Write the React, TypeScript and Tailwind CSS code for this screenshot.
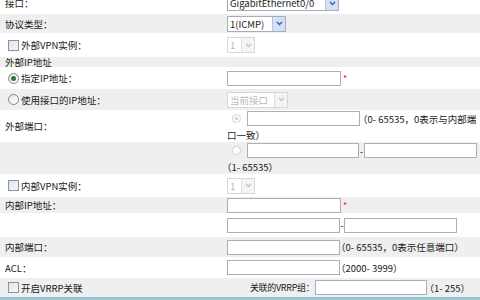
import React from 'react';

function Select({ value, className, disabled }: { value: string; className: string; disabled?: boolean }) {
  return (
    <div
      className={`flex h-[16px] items-stretch border bg-white ${
        disabled ? 'border-[#d6d6d6] text-[#b8b8b8]' : 'border-[#a7aeb8] text-[#1a1a1a]'
      } ${className}`}
    >
      <span className="flex-1 truncate pl-[2px] leading-[14px]">{value}</span>
      <span
        className={`flex w-[13px] items-center justify-center border-l ${
          disabled ? 'border-[#e0e0e0] bg-[#f4f4f4]' : 'border-[#b4c6e6] bg-[#d3e0f7]'
        }`}
      >
        <svg width="7" height="5" viewBox="0 0 7 5">
          <path d="M1 1l2.5 2.5L6 1" fill="none" stroke={disabled ? '#c4c4c4' : '#3a5fa8'} strokeWidth="1.4" />
        </svg>
      </span>
    </div>
  );
}

function Input({ className }: { className: string }) {
  return <div className={`h-[15px] border border-[#a9b0ba] bg-white ${className}`} />;
}

function Checkbox() {
  return <span className="mr-[2px] inline-block h-[11px] w-[11px] shrink-0 border border-[#8494a6] bg-gradient-to-br from-[#dde4ec] to-[#f6f8fa]" />;
}

function Radio({ checked, disabled }: { checked?: boolean; disabled?: boolean }) {
  if (disabled) {
    return (
      <span className="flex h-[9px] w-[9px] shrink-0 items-center justify-center rounded-full border border-[#d2d2d2] bg-white">
        {checked && <span className="h-[3px] w-[3px] rounded-full bg-[#c8c8c8]" />}
      </span>
    );
  }
  return (
    <span className="mr-[2px] flex h-[11px] w-[11px] shrink-0 items-center justify-center rounded-full border border-[#7d8793] bg-gradient-to-br from-[#e4e8ec] to-white">
      {checked && <span className="h-[5px] w-[5px] rounded-full bg-[#2d7a3a]" />}
    </span>
  );
}

function Star() {
  return <span className="ml-[2px] text-[9px] leading-none text-[#e02020]">*</span>;
}

function Row({ gray, h, label, children }: { gray?: boolean; h: string; label?: React.ReactNode; children?: React.ReactNode }) {
  return (
    <div className={`flex ${h} ${gray ? 'bg-[#efefef]' : 'bg-white'}`}>
      <div className="flex w-[227px] shrink-0 items-center pl-[5px]">{label}</div>
      <div className="flex min-w-0 flex-1 items-center">{children}</div>
    </div>
  );
}

export default function App() {
  return (
    <div className="h-[300px] w-[480px] overflow-hidden bg-white font-['Noto_Sans_CJK_SC','Liberation_Sans',sans-serif] text-[9.5px] leading-[12px] text-[#1a1a1a]">
      {/* 接口 row, scrolled partly out of view */}
      <div className="h-[14px] overflow-hidden bg-white">
        <div className="-mt-[8px] flex h-[22px]">
          <div className="flex w-[227px] shrink-0 items-center pl-[5px]">接口：</div>
          <div className="flex items-center">
            <Select value="GigabitEthernet0/0" className="w-[112px]" />
          </div>
        </div>
      </div>

      <Row gray h="h-[19px]" label="协议类型：">
        <Select value="1(ICMP)" className="w-[59px]" />
      </Row>

      <Row h="h-[24px]" label={<><span className="ml-[3px]" /><Checkbox />外部VPN实例：</>}>
        <Select value="1" className="w-[28px]" disabled />
      </Row>

      <div className="flex h-[10px] items-center bg-[#efefef] pl-[5px] leading-[10px]">外部IP地址</div>

      <Row h="h-[22px]" label={<><span className="ml-[3px]" /><Radio checked />指定IP地址：</>}>
        <Input className="w-[114px]" />
        <Star />
      </Row>

      <Row gray h="h-[21px]" label={<><span className="ml-[3px]" /><Radio />使用接口的IP地址：</>}>
        <Select value="当前接口" className="w-[61px]" disabled />
      </Row>

      <Row h="h-[32px]" label="外部端口：">
        <div className="flex flex-col">
          <div className="flex items-center">
            <span className="ml-[5px] mr-[6px]"><Radio checked disabled /></span>
            <Input className="w-[113px]" />
            <span className="-ml-[2px] whitespace-nowrap">（0- 65535，0表示与内部端</span>
          </div>
          <div className="mt-[3px] whitespace-nowrap">口一致）</div>
        </div>
      </Row>

      <Row gray h="h-[32px]">
        <div className="flex flex-col">
          <div className="flex items-center">
            <span className="ml-[5px] mr-[6px]"><Radio disabled /></span>
            <Input className="w-[112px]" />
            <span className="w-[5px] text-center leading-[8px]">-</span>
            <Input className="w-[113px]" />
          </div>
          <div className="mt-[3px] -ml-[5px] whitespace-nowrap">（1- 65535）</div>
        </div>
      </Row>

      <Row h="h-[23px]" label={<><span className="ml-[3px]" /><Checkbox />内部VPN实例：</>}>
        <Select value="1" className="w-[28px]" disabled />
      </Row>

      <Row gray h="h-[16px]" label="内部IP地址：">
        <Input className="w-[114px]" />
        <Star />
      </Row>

      <Row h="h-[24px]">
        <Input className="w-[113px]" />
        <span className="w-[4px] text-center leading-[8px]">-</span>
        <Input className="w-[113px]" />
      </Row>

      <Row gray h="h-[20px]" label="内部端口：">
        <Input className="w-[113px]" />
        <span className="-ml-[4px] whitespace-nowrap">（0- 65535，0表示任意端口）</span>
      </Row>

      <Row h="h-[21px]" label="ACL：">
        <Input className="w-[113px]" />
        <span className="-ml-[4px] whitespace-nowrap">（2000- 3999）</span>
      </Row>

      <div className="flex h-[19px] items-center bg-[#efefef]">
        <div className="flex flex-1 items-center pl-[8px]">
          <Checkbox />开启VRRP关联
        </div>
        <span className="mr-[1px] whitespace-nowrap text-[9px] tracking-[-0.3px]">关联的VRRP组：</span>
        <Input className="w-[112px]" />
        <span className="mr-[10px] -ml-[3px] whitespace-nowrap">（1- 255）</span>
      </div>

      <div className="h-[3px] bg-[#93c6cf]" />
    </div>
  );
}
